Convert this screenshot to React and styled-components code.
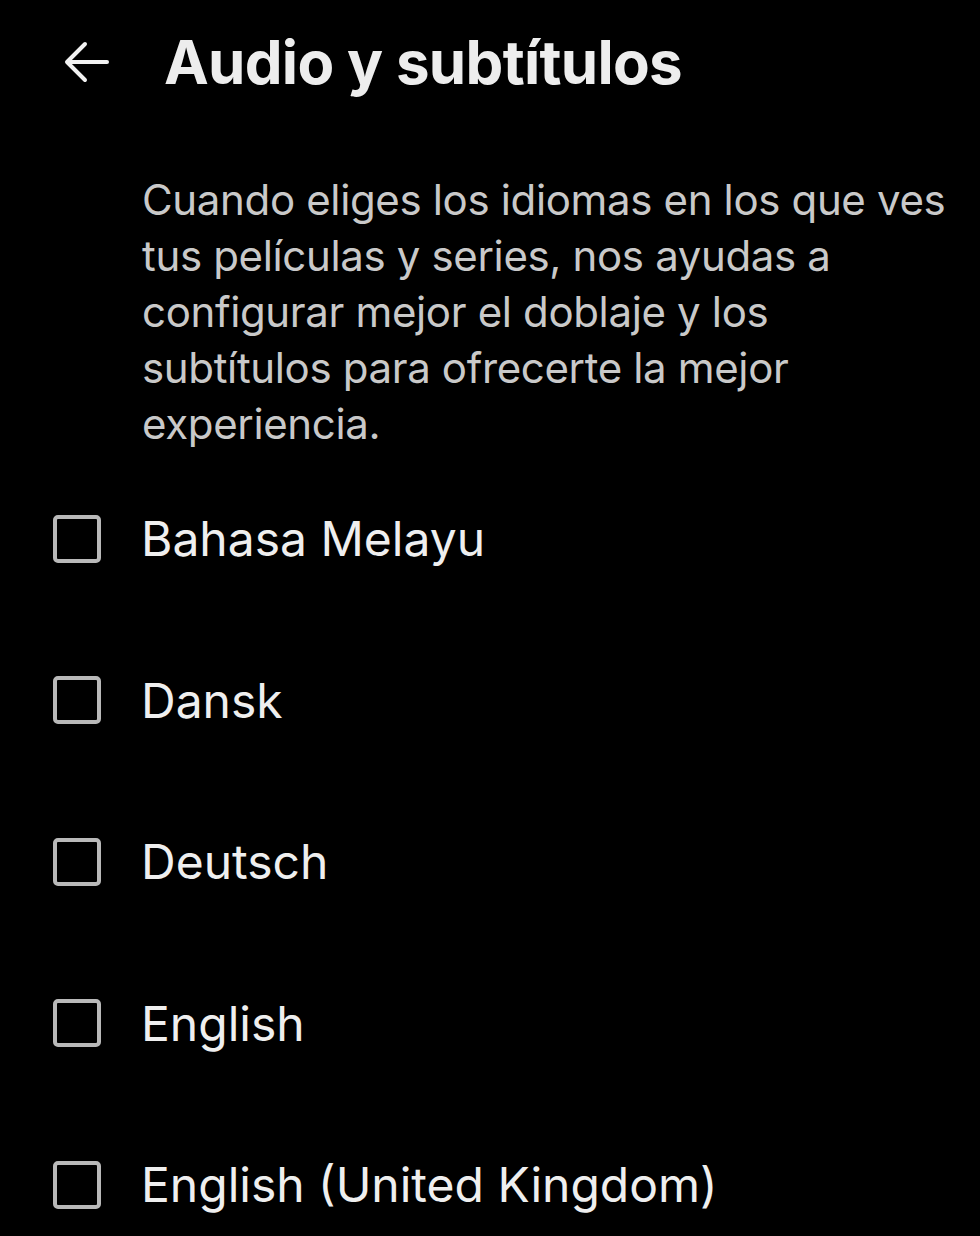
import React from 'react'
import styled, { createGlobalStyle } from 'styled-components'

const GlobalStyle = createGlobalStyle`
  html, body {
    margin: 0;
    padding: 0;
    background: #000;
  }
  body {
    font-family: Inter, "Noto Sans", sans-serif;
    -webkit-font-smoothing: antialiased;
  }
`

const Page = styled.div`
  width: 980px;
  height: 1236px;
  background: #000;
  overflow: hidden;
  color: #ececec;
`

const Header = styled.header`
  display: flex;
  align-items: center;
  height: 128px;
  padding-left: 62px;
  gap: 52px;
`

const BackButton = styled.button`
  display: flex;
  align-items: center;
  justify-content: center;
  width: 50px;
  height: 50px;
  padding: 0;
  border: none;
  background: none;
  color: #f2f2f2;
  margin-top: -4px;
`

const Title = styled.h1`
  margin: 0;
  margin-top: -4px;
  font-size: 60px;
  font-weight: 700;
  letter-spacing: -0.7px;
  color: #ededed;
`

const Intro = styled.p`
  margin: 44px 0 0 142px;
  max-width: 815px;
  font-size: 42px;
  line-height: 56px;
  color: #c9c9c9;
  letter-spacing: -0.35px;
`

const List = styled.ul`
  list-style: none;
  margin: 6px 0 0;
  padding: 0;
`

const Row = styled.li`
  display: flex;
  align-items: center;
  height: 161.5px;
  padding-left: 53px;
  gap: 40px;
`

const Box = styled.span`
  box-sizing: border-box;
  width: 48px;
  height: 48px;
  border: 4px solid #b9b9b9;
  border-radius: 5px;
  flex-shrink: 0;
`

const Label = styled.span`
  font-size: 48px;
  font-weight: 400;
  color: #efefef;
`

const languages = ['Bahasa Melayu', 'Dansk', 'Deutsch', 'English', 'English (United Kingdom)']

const App = () => {
  return (
    <Page>
      <GlobalStyle />
      <Header>
        <BackButton aria-label="Atrás">
          <svg width="46" height="42" viewBox="0 0 46 42" fill="none" stroke="currentColor" strokeWidth="4" strokeLinecap="round" strokeLinejoin="round">
            <path d="M43 21H4" />
            <path d="M21 3L3 21l18 18" />
          </svg>
        </BackButton>
        <Title>Audio y subtítulos</Title>
      </Header>
      <Intro>
        Cuando eliges los idiomas en los que ves tus películas y series, nos ayudas a configurar mejor el doblaje y los subtítulos para ofrecerte la mejor experiencia.
      </Intro>
      <List>
        {languages.map((lang) => (
          <Row key={lang}>
            <Box />
            <Label>{lang}</Label>
          </Row>
        ))}
      </List>
    </Page>
  )
}

export default App
